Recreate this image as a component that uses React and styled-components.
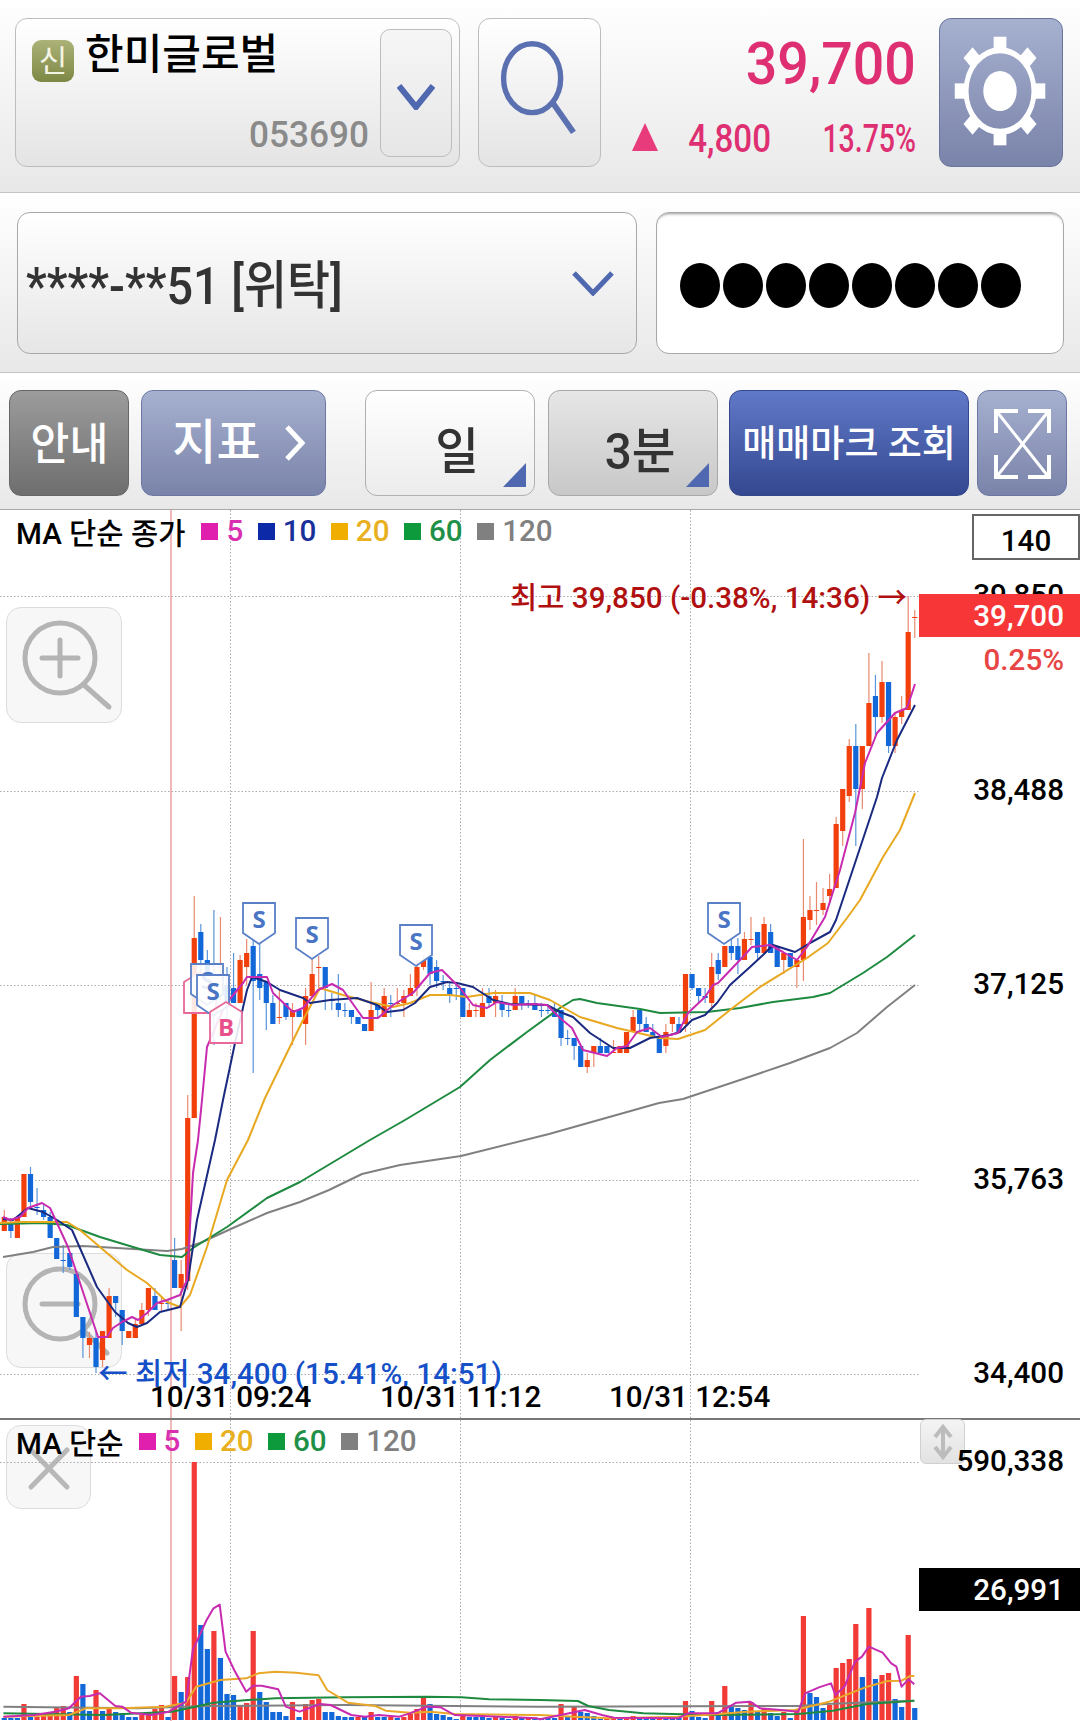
import styled, { createGlobalStyle, css } from "styled-components";

const GlobalStyle = createGlobalStyle`
	html, body {
		margin: 0;
		padding: 0;
		background: #fff;
	}
	* {
		box-sizing: border-box;
	}
	body {
		font-family: Roboto, "Noto Sans CJK KR", sans-serif;
		color: #000;
	}
`;

const R = "r";
const B = "b";

// type, body top, body bottom, wick top, wick bottom (page pixels)
const CANDLES = [
	[R, 1217, 1231, 1210, 1231], [B, 1224, 1231, 1218, 1238], [R, 1217, 1238, 1217, 1238], [R, 1174, 1217, 1174, 1217],
	[B, 1174, 1202, 1167, 1208], [B, 1207, 1208, 1188, 1215], [B, 1210, 1217, 1203, 1220], [B, 1217, 1238, 1212, 1238],
	[B, 1238, 1259, 1238, 1259], [B, 1260, 1261, 1245, 1273], [B, 1253, 1267, 1252, 1270], [B, 1274, 1317, 1274, 1317],
	[B, 1317, 1338, 1317, 1358], [R, 1338, 1345, 1332, 1358], [B, 1338, 1367, 1332, 1373], [R, 1331, 1360, 1331, 1367],
	[R, 1296, 1338, 1288, 1338], [B, 1296, 1303, 1296, 1317], [B, 1310, 1331, 1310, 1345], [R, 1331, 1338, 1331, 1338],
	[R, 1324, 1338, 1320, 1338], [R, 1310, 1324, 1303, 1324], [R, 1288, 1310, 1288, 1316], [B, 1296, 1310, 1288, 1310],
	[R, 1303, 1304, 1296, 1312], [B, 1303, 1304, 1300, 1310], [B, 1260, 1288, 1238, 1288], [R, 1274, 1288, 1260, 1331],
	[R, 1118, 1281, 1095, 1290], [R, 938, 1118, 896, 1118], [B, 932, 960, 924, 975], [B, 960, 985, 950, 1000],
	[B, 990, 1000, 910, 1045], [R, 975, 990, 917, 1000], [B, 985, 1003, 967, 1020], [B, 988, 1003, 953, 1003],
	[R, 960, 1003, 955, 1003], [R, 953, 967, 939, 985], [B, 946, 981, 940, 1073], [B, 974, 988, 943, 1000],
	[B, 982, 1003, 982, 1030], [B, 1003, 1024, 995, 1024], [R, 1017, 1018, 990, 1024], [B, 1003, 1017, 1003, 1020],
	[R, 1010, 1017, 1003, 1045], [B, 1010, 1017, 1010, 1017], [R, 996, 1024, 988, 1045], [R, 974, 996, 953, 996],
	[R, 967, 968, 956, 988], [B, 967, 988, 967, 1010], [B, 1000, 1001, 993, 1010], [B, 1003, 1010, 974, 1017],
	[B, 1010, 1011, 1003, 1017], [B, 1010, 1017, 1010, 1024], [B, 1017, 1024, 1017, 1024], [B, 1024, 1031, 1024, 1031],
	[R, 1010, 1031, 982, 1031], [B, 1003, 1010, 1003, 1017], [R, 996, 1017, 988, 1017], [B, 1003, 1004, 995, 1017],
	[R, 1003, 1004, 988, 1005], [R, 996, 1003, 990, 1017], [R, 988, 996, 974, 996], [R, 967, 988, 960, 996],
	[R, 960, 967, 955, 970], [B, 957, 974, 957, 985], [B, 967, 981, 960, 988], [B, 981, 982, 975, 990],
	[B, 988, 996, 982, 1003], [B, 988, 989, 982, 1000], [B, 988, 1017, 988, 1017], [R, 1010, 1017, 1003, 1017],
	[R, 1010, 1011, 1003, 1017], [R, 1003, 1017, 988, 1017], [B, 996, 1003, 988, 1008], [R, 996, 1003, 990, 1017],
	[B, 1003, 1010, 995, 1017], [B, 1010, 1011, 1003, 1017], [R, 996, 1010, 988, 1010], [B, 996, 1003, 996, 1010],
	[B, 1003, 1004, 1000, 1008], [B, 1003, 1010, 995, 1010], [B, 1010, 1011, 1003, 1017], [B, 1010, 1011, 1005, 1014],
	[B, 1010, 1017, 1003, 1017], [B, 1010, 1038, 1010, 1046], [B, 1038, 1039, 1030, 1045], [B, 1038, 1046, 1038, 1060],
	[B, 1046, 1067, 1046, 1067], [R, 1060, 1067, 1053, 1073], [R, 1046, 1053, 1046, 1067], [B, 1046, 1053, 1038, 1053],
	[B, 1046, 1053, 1046, 1053], [R, 1052, 1053, 1040, 1053], [R, 1046, 1053, 1046, 1053], [R, 1032, 1053, 1032, 1053],
	[R, 1017, 1032, 1010, 1032], [B, 1010, 1024, 1010, 1032], [B, 1024, 1032, 1017, 1032], [B, 1032, 1038, 1024, 1038],
	[B, 1038, 1053, 1038, 1053], [R, 1032, 1046, 1024, 1053], [R, 1017, 1024, 1017, 1032], [B, 1024, 1032, 1017, 1032],
	[R, 974, 1024, 974, 1032], [B, 974, 988, 974, 990], [B, 988, 996, 988, 1003], [B, 996, 998, 988, 1003],
	[R, 967, 1003, 953, 1010], [B, 960, 974, 953, 980], [R, 946, 967, 946, 967], [B, 946, 953, 938, 960],
	[B, 946, 960, 938, 974], [R, 939, 960, 932, 960], [R, 939, 940, 917, 945], [B, 932, 953, 932, 960],
	[R, 924, 953, 917, 953], [B, 932, 953, 924, 953], [B, 946, 967, 946, 967], [R, 953, 960, 953, 974],
	[B, 953, 967, 953, 967], [R, 960, 967, 960, 988], [R, 917, 960, 839, 981], [R, 910, 920, 896, 930],
	[R, 910, 911, 882, 925], [R, 903, 910, 888, 915], [R, 889, 896, 874, 905], [R, 824, 888, 817, 888],
	[R, 789, 831, 789, 846], [R, 746, 796, 739, 802], [B, 746, 789, 724, 846], [R, 746, 789, 746, 809],
	[R, 703, 746, 653, 746], [B, 696, 717, 675, 738], [R, 682, 717, 661, 723], [B, 682, 746, 682, 753],
	[R, 717, 746, 712, 753], [R, 710, 717, 696, 724], [R, 632, 710, 596, 710], [R, 617, 618, 610, 638],
];

const MA5 = [[3,1217],[10,1220],[20,1217],[28,1208],[42,1203],[50,1208],[57,1223],[68,1247],[80,1283],[90,1313],[98,1337],[107,1337],[113,1328],[122,1322],[132,1317],[138,1320],[147,1313],[157,1303],[167,1300],[180,1295],[187,1280],[193,1173],[198,1140],[202,1100],[207,1047],[225,1005],[243,983],[247,977],[267,977],[273,993],[293,1012],[303,1008],[318,990],[332,984],[343,990],[363,1018],[378,1018],[393,1005],[413,993],[430,973],[442,970],[460,988],[473,1005],[487,1008],[497,1002],[513,1005],[533,1004],[547,1005],[560,1018],[572,1028],[583,1050],[607,1056],[617,1048],[627,1046],[637,1032],[650,1028],[662,1037],[678,1033],[688,1013],[705,997],[713,985],[718,983],[740,960],[752,947],[770,945],[783,952],[797,960],[807,947],[825,917],[840,870],[855,813],[865,763],[877,733],[895,713],[907,708],[915,684]];
const MA10 = [[3,1219],[13,1220],[28,1208],[43,1212],[57,1220],[72,1230],[83,1255],[97,1287],[115,1312],[128,1323],[137,1327],[147,1323],[160,1312],[180,1307],[188,1280],[197,1220],[215,1140],[223,1100],[235,1043],[247,990],[252,977],[267,982],[280,990],[303,998],[310,1003],[330,1000],[357,998],[377,1005],[387,1012],[403,1010],[415,1003],[430,987],[447,982],[457,983],[473,987],[493,1000],[510,1004],[547,1005],[560,1012],[573,1017],[590,1033],[613,1048],[630,1048],[650,1038],[670,1035],[680,1032],[692,1020],[705,1015],[717,1003],[730,985],[750,967],[763,955],[773,945],[795,952],[810,943],[830,932],[836,920],[855,863],[877,797],[882,778],[897,740],[915,705]];
const MA20 = [[0,1223],[20,1222],[43,1222],[67,1222],[80,1230],[107,1253],[127,1270],[147,1283],[167,1302],[180,1307],[190,1295],[207,1247],[227,1180],[248,1140],[265,1098],[303,1020],[320,988],[343,995],[370,1002],[393,1007],[410,1003],[430,995],[450,995],[467,997],[493,993],[530,993],[550,1000],[580,1017],[617,1028],[660,1038],[678,1039],[705,1030],[730,1010],[760,987],[807,958],[828,943],[847,918],[860,900],[883,857],[900,830],[915,793]];
const MA60 = [[0,1224],[43,1223],[67,1225],[100,1237],[133,1247],[160,1255],[182,1257],[193,1248],[227,1227],[267,1198],[300,1182],[335,1161],[370,1140],[405,1120],[440,1099],[460,1087],[490,1060],[527,1032],[560,1008],[573,1000],[580,999],[597,1003],[640,1009],[660,1013],[707,1012],[740,1008],[773,1002],[813,997],[830,993],[863,973],[887,957],[915,935]];
const MA120 = [[3,1257],[33,1252],[53,1247],[83,1246],[117,1248],[167,1251],[182,1249],[200,1243],[233,1228],[267,1213],[300,1202],[329,1190],[362,1174],[400,1165],[461,1156],[549,1134],[659,1103],[683,1099],[740,1080],[790,1063],[830,1048],[857,1033],[887,1007],[915,985]];

// volume bar tops, one per candle, in page pixels
const VOLUMES = [1718,1718,1718,1704,1717,1717,1716,1715,1708,1706,1712,1676,1684,1711,1690,1711,1708,1712,1713,1717,1717,1715,1713,1709,1705,1717,1676,1692,1677,1462,1625,1649,1631,1658,1694,1695,1706,1703,1631,1692,1702,1712,1712,1716,1702,1717,1704,1700,1699,1712,1712,1716,1717,1717,1717,1717,1712,1717,1717,1717,1718,1717,1714,1709,1698,1704,1714,1715,1717,1719,1715,1717,1717,1717,1718,1717,1718,1719,1716,1718,1718,1718,1718,1718,1718,1704,1717,1707,1712,1713,1716,1719,1718,1717,1718,1717,1716,1717,1717,1718,1717,1718,1718,1718,1701,1711,1717,1718,1701,1712,1686,1706,1708,1710,1702,1712,1708,1713,1716,1712,1718,1710,1616,1693,1697,1708,1705,1668,1663,1659,1624,1677,1608,1679,1675,1673,1699,1707,1635,1708];
const VOLUME_UP = new Set([3,5,6,7,8,9,11,14,16,21,22,23,24,26,28,29,32,36,37,38,44,46,47,48,54,56,59,61,62,63,64,70,75,78,80,85,87,92,93,95,96,100,104,108,110,114,116,119,121,122,126,127,128,129,130,132,134,135,138]);

const toLeft = (pts) => pts.map(([x, y]) => [x / 2.904, 1400 + y / 3]);
const toRight = (pts) => pts.map(([x, y]) => [540 + x / 2.904, 1400 + y / 3]);

const VOL_MA5 = [...toLeft([[10,950],[100,945],[160,935],[200,925],[235,890],[260,888],[290,880],[335,918],[355,920],[380,938],[440,945],[490,935],[540,905],[560,750],[600,660],[620,625],[638,614],[655,755],[680,810],[715,875],[735,857],[760,857],[808,868],[830,920],[870,935],[930,912],[960,915],[1020,945],[1060,950],[1100,945],[1160,950],[1190,940],[1240,920],[1280,922],[1320,945],[1400,948],[1560,955]]), ...toRight([[0,958],[60,945],[130,930],[180,945],[215,953],[400,955],[430,940],[480,940],[515,940],[570,908],[610,905],[640,925],[700,930],[750,935],[770,880],[810,862],[845,850],[858,885],[885,858],[915,785],[935,770],[955,740],[995,758],[1020,790],[1035,800],[1050,860],[1070,838],[1087,853]])];
const VOL_MA20 = [...toLeft([[10,950],[200,945],[250,925],[350,925],[480,920],[540,908],[570,860],[640,840],[715,835],[750,820],[800,815],[860,818],[925,826],[950,870],[1010,908],[1090,918],[1120,932],[1190,938],[1250,935],[1320,942],[1560,945]]), ...toRight([[0,945],[100,950],[200,955],[400,950],[520,942],[600,935],[740,930],[840,905],[950,860],[1010,843],[1050,842],[1075,828],[1087,828]])];
const VOL_MA60 = [...toLeft([[10,940],[300,945],[500,935],[620,908],[720,900],[800,895],[1000,892],[1240,890],[1340,892],[1420,898],[1568,900]]), ...toRight([[0,900],[110,903],[140,918],[200,930],[300,940],[500,945],[750,942],[850,932],[950,912],[1087,902]])];
const VOL_MA120 = [...toLeft([[10,920],[400,925],[600,918],[1000,915],[1568,920]]), ...toRight([[0,920],[750,918],[830,912],[1087,902]])];

const candleX = (i) => 4.3 + 6.55 * i;
const toPoints = (pts) => pts.map((p) => p.join(",")).join(" ");

const BODY = { r: "#f2400d", b: "#1268d8" };
const WICK = { r: "#e98a70", b: "#5a94da" };

const squeeze = (sx, origin = "left") => css`
	transform: scaleX(${sx});
	transform-origin: ${origin} center;
`;

const Page = styled.div`
	width: 1080px;
	height: 1721px;
	overflow: hidden;
	display: flex;
	flex-direction: column;
`;

const Bar = styled.div`
	display: flex;
	height: ${(p) => p.$h}px;
	background: linear-gradient(#fff, #e8e8e8);
	border-bottom: 1px solid #c4c4c4;
`;

const TopBar = styled(Bar)`
	padding: 18px 17px 0 15px;
	align-items: flex-start;
`;

const StockBox = styled.div`
	width: 445px;
	height: 149px;
	padding: 10px 7px 9px 16px;
	display: flex;
	border: 1px solid #bdbdbd;
	border-radius: 12px;
	background: linear-gradient(#fff, #e4e4e4);
`;

const StockInfo = styled.div`
	flex: 1;
	padding: 1px 11px 0 0;
	display: flex;
	flex-direction: column;
	justify-content: space-between;
`;

const StockTitle = styled.div`
	display: flex;
	align-items: flex-start;
	gap: 11px;
`;

const Badge = styled.span`
	width: 42px;
	height: 42px;
	margin-top: 10px;
	display: flex;
	align-items: center;
	justify-content: center;
	border-radius: 9px;
	background: linear-gradient(#acb278, #7d8844);
	color: #f4f4e4;
	font-size: 31px;
	line-height: 1;
`;

const StockName = styled.span`
	margin-top: 2px;
	font-size: 42px;
	font-weight: 500;
	line-height: 46px;
	white-space: nowrap;
`;

const StockCode = styled.div`
	display: flex;
	justify-content: flex-end;
	font-size: 37px;
	font-weight: 500;
	line-height: 44px;
	color: #8a8a8a;
	${squeeze(0.95, "right")}
`;

const DropButton = styled.div`
	width: 72px;
	padding-top: 8px;
	display: flex;
	align-items: center;
	justify-content: center;
	border: 1px solid #bdbdbd;
	border-radius: 10px;
	background: linear-gradient(#f6f6f6, #e6e6e6);
`;

const SearchButton = styled.div`
	width: 123px;
	height: 149px;
	margin-left: 18px;
	border: 1px solid #bdbdbd;
	border-radius: 12px;
	background: linear-gradient(#fff, #e4e4e4);
`;

const PriceBlock = styled.div`
	flex: 1;
	height: 149px;
	padding: 19px 23px 0 0;
	display: flex;
	flex-direction: column;
	align-items: flex-end;
	color: #de2f72;
`;

const PriceNow = styled.div`
	font-size: 59px;
	font-weight: 500;
	line-height: 54px;
	${squeeze(0.94, "right")}
`;

const PriceChange = styled.div`
	margin-top: 22px;
	display: flex;
	align-items: center;
`;

const UpMark = styled.span`
	width: 26px;
	height: 28px;
	margin-right: 32px;
	background: #e83b7c;
	clip-path: polygon(50% 0, 100% 100%, 0 100%);
`;

const ChangeText = styled.span`
	display: flex;
	justify-content: flex-end;
	width: ${(p) => p.$w}px;
	margin: 4px 0 0 ${(p) => p.$gap || 0}px;
	font-size: 39px;
	font-weight: 500;
	line-height: 44px;
	white-space: nowrap;
	${(p) => squeeze(p.$sx, "right")}
`;

const SettingsButton = styled.div`
	width: 124px;
	height: 149px;
	border: 1px solid #68749c;
	border-radius: 12px;
	background: linear-gradient(#a6b0cf, #7a83a9);
`;

const AccountBar = styled(Bar)`
	padding: 19px 16px 0 17px;
	gap: 19px;
`;

const AccountBox = styled.div`
	width: 620px;
	height: 142px;
	padding: 0 22px 0 8px;
	display: flex;
	align-items: center;
	justify-content: space-between;
	border: 1px solid #a8a8a8;
	border-radius: 13px;
	background: linear-gradient(#fff, #e6e6e6);
`;

const AccountText = styled.span`
	margin-top: 8px;
	font-size: 52px;
	font-weight: 500;
	line-height: 60px;
	color: #333;
	white-space: nowrap;
	${squeeze(0.9)}
`;

const PasswordBox = styled.div`
	flex: 1;
	height: 142px;
	padding: 5px 0 0 23px;
	display: flex;
	align-items: center;
	gap: 3px;
	border: 1px solid #a8a8a8;
	border-radius: 13px;
	background: #fff;
	box-shadow: inset 0 3px 3px -2px #999;
`;

const PasswordDot = styled.span`
	width: 40px;
	height: 45px;
	border-radius: 50%;
	background: #000;
`;

const ToolBar = styled(Bar)`
	padding: 17px 0 0 9px;
	border-bottom-color: #a8a8a8;
`;

const ToolButton = styled.div`
	position: relative;
	width: ${(p) => p.$w}px;
	height: 106px;
	margin-left: ${(p) => p.$gap || 0}px;
	padding-left: ${(p) => p.$pad || 0}px;
	display: flex;
	align-items: center;
	justify-content: center;
	gap: ${(p) => p.$inner || 0}px;
	border: 1px solid ${(p) => p.$line || "#666"};
	border-radius: 12px;
	background: linear-gradient(${(p) => p.$from}, ${(p) => p.$to});
	color: #fff;
	font-weight: 500;
	white-space: nowrap;
`;

const ToolLabel = styled.span`
	margin-top: ${(p) => p.$dy || 0}px;
	font-size: ${(p) => p.$size}px;
	line-height: 50px;
	${(p) => squeeze(p.$sx || 1, "center")}
`;

const PickLabel = styled.span`
	margin: 18px 0 0 14px;
	font-size: 50px;
	line-height: 50px;
	color: #333;
	${squeeze(0.95, "center")}
`;

const CornerMark = styled.span`
	position: absolute;
	right: 8px;
	bottom: 8px;
	width: 23px;
	height: 24px;
	background: #5068b0;
	clip-path: polygon(100% 0, 100% 100%, 0 100%);
`;

const ChartPanel = styled.section`
	position: relative;
	height: 908px;
`;

const VolumePanel = styled.section`
	position: relative;
	flex: 1;
	border-top: 2px solid #777;
`;

const Canvas = styled.svg`
	position: absolute;
	left: 0;
	top: 0;
	width: 1080px;
	height: 100%;
`;

const Legend = styled.div`
	position: relative;
	height: 42px;
	padding-left: 16px;
	display: flex;
	align-items: center;
	font-size: 29.6px;
	font-weight: 500;
	white-space: nowrap;
`;

const LegendTitle = styled.span`
	margin-right: ${(p) => p.$gap}px;
	color: #000;
`;

const LegendItem = styled.span`
	display: flex;
	align-items: center;
	gap: 8px;
	margin-right: 14.5px;
	color: ${(p) => p.$text};

	&::before {
		content: "";
		width: 17px;
		height: 17px;
		background: ${(p) => p.$color};
	}
`;

const AxisLabel = styled.span`
	position: absolute;
	right: 16px;
	top: ${(p) => p.$y - 20}px;
	font-size: 29.6px;
	font-weight: 500;
	line-height: 40px;
	color: #000;
`;

const CountBox = styled.div`
	position: absolute;
	left: 972px;
	top: 4px;
	width: 108px;
	height: 46px;
	padding-top: 8px;
	display: flex;
	align-items: center;
	justify-content: center;
	border: 2px solid #666;
	font-size: 29.6px;
	font-weight: 500;
`;

const PriceTag = styled.div`
	position: absolute;
	left: 919px;
	top: ${(p) => p.$y}px;
	width: 161px;
	height: ${(p) => p.$h}px;
	padding-right: 16px;
	display: flex;
	align-items: center;
	justify-content: flex-end;
	background: ${(p) => p.$bg};
	color: #fff;
	font-size: 29.6px;
	font-weight: 500;
`;

const PercentLabel = styled(AxisLabel)`
	color: #e84545;
`;

const Note = styled.span`
	position: absolute;
	left: ${(p) => p.$x}px;
	top: ${(p) => p.$y - 20}px;
	font-size: 29.6px;
	font-weight: 500;
	line-height: 40px;
	color: ${(p) => p.$color};
	white-space: nowrap;
`;

const FloatButton = styled.div`
	position: absolute;
	left: 6px;
	top: ${(p) => p.$y}px;
	width: ${(p) => p.$w}px;
	height: ${(p) => p.$h}px;
	border: 1px solid #dcdcdc;
	border-radius: 15px;
	background: #f7f7f7;
`;

const ResizeButton = styled.div`
	position: absolute;
	left: 920px;
	top: -1px;
	width: 45px;
	height: 45px;
	border: 1px solid #d0d0d0;
	border-radius: 6px;
	background: linear-gradient(#f4f4f4, #e2e2e2);
`;

const IconBox = styled.svg`
	display: block;
	width: 100%;
	height: 100%;
`;

const Chevron = ({ w, h, color = "#5068b0", stroke = 6 }) => (
	<svg width={w} height={h} viewBox={`0 0 ${w} ${h}`}>
		<polyline
			points={`2,2 ${w / 2},${h - 3} ${w - 2},2`}
			fill="none"
			stroke={color}
			strokeWidth={stroke}
		/>
	</svg>
);

const SearchIcon = () => (
	<IconBox viewBox="0 0 123 149">
		<ellipse cx="54" cy="60" rx="29" ry="35" fill="none" stroke="#5a70b0" strokeWidth="5.5" />
		<line x1="75" y1="85" x2="96" y2="115" stroke="#5a70b0" strokeWidth="6" />
	</IconBox>
);

const GearIcon = () => (
	<IconBox viewBox="0 0 124 149">
		<g transform="translate(61 73) scale(1 1.2)" fill="#fff">
			{[0, 45, 90, 135, 180, 225, 270, 315].map((a) => (
				<rect key={a} x="-6.5" y="-46" width="13" height="12" transform={`rotate(${a})`} />
			))}
			<circle r="34.5" fill="none" stroke="#fff" strokeWidth="5" />
			<circle r="17" />
		</g>
	</IconBox>
);

const ExpandIcon = () => (
	<svg width="89" height="106" viewBox="0 0 89 106" style={{ position: "absolute", left: 0, top: 0 }}>
		<g fill="none" stroke="#fff" strokeWidth="4">
			<path d="M18 42 V20 H40 M50 20 H71 V42 M71 64 V86 H50 M40 86 H18 V64" />
			<path d="M20 22 L69 84 M69 22 L20 84" strokeWidth="3" />
		</g>
	</svg>
);

const ZoomIcon = ({ plus, cx, cy, hx, hy }) => (
	<IconBox>
		<g fill="none" stroke="#b4b4b4" strokeWidth="5" strokeLinecap="round">
			<circle cx={cx} cy={cy} r="35" />
			<line x1={cx + 24} y1={cy + 27} x2={hx} y2={hy} />
			<line x1={cx - 18} y1={cy} x2={cx + 18} y2={cy} />
			{plus && <line x1={cx} y1={cy - 18} x2={cx} y2={cy + 18} />}
		</g>
	</IconBox>
);

const CloseIcon = () => (
	<IconBox>
		<path d="M24 24 L60 61 M60 24 L24 61" stroke="#b8b8b8" strokeWidth="5" strokeLinecap="round" />
	</IconBox>
);

const ResizeIcon = () => (
	<IconBox>
		<path
			d="M14 17 L22 7 L30 17 M22 7 V37 M14 27 L22 37 L30 27"
			fill="none"
			stroke="#bcbcbc"
			strokeWidth="4"
		/>
	</IconBox>
);

const GridLines = ({ ys, bottom, top }) => (
	<g stroke="#aaa" strokeWidth="1" strokeDasharray="1.5 2">
		{ys.map((y) => (
			<line key={y} x1="0" y1={y + 0.5} x2="920" y2={y + 0.5} />
		))}
		{[230.5, 460.5, 690.5].map((x) => (
			<line key={x} x1={x} y1={top} x2={x} y2={bottom} />
		))}
	</g>
);

const Line = ({ pts, color, w = 2 }) => (
	<polyline points={toPoints(pts)} fill="none" stroke={color} strokeWidth={w} strokeLinejoin="round" />
);

const Candles = () =>
	CANDLES.map(([type, top, bottom, wickTop, wickBottom], i) => {
		const x = candleX(i);
		return (
			<g key={i}>
				<line x1={x} y1={wickTop} x2={x} y2={wickBottom} stroke={WICK[type]} strokeWidth="1.2" />
				<rect x={x - 2.6} y={top} width="5.2" height={bottom - top} fill={BODY[type]} />
			</g>
		);
	});

const VolumeBars = () =>
	VOLUMES.map((top, i) => (
		<rect
			key={i}
			x={candleX(i) - 2.6}
			y={top}
			width="5.2"
			height={1720 - top}
			fill={VOLUME_UP.has(i) ? "#f23a36" : "#1268d8"}
		/>
	));

// trade marks on the chart, S hangs from its top edge, B stands on its bottom edge
const SellMark = ({ x, y }) => (
	<g>
		<path
			d={`M${x} ${y} h32 v30 l-16 11 l-16 -11 z`}
			fill="#fff"
			fillOpacity="0.88"
			stroke="#5a80c8"
			strokeWidth="1.8"
		/>
		<text
			x={x + 16}
			y={y + 25}
			textAnchor="middle"
			fontFamily="'Open Sans', sans-serif"
			fontWeight="700"
			fontSize="24"
			fill="#4a74c4"
		>
			S
		</text>
	</g>
);

const BuyMark = ({ x, y, label = true }) => (
	<g>
		<path
			d={`M${x} ${y + 10} l16 -10 l16 10 v31 h-32 z`}
			fill="#fff"
			fillOpacity="0.88"
			stroke="#e8689a"
			strokeWidth="1.8"
		/>
		{label && (
			<text
				x={x + 16}
				y={y + 34}
				textAnchor="middle"
				fontFamily="'Open Sans', sans-serif"
				fontWeight="700"
				fontSize="24"
				fill="#e8508c"
			>
				B
			</text>
		)}
	</g>
);

const App = () => {
	return (
		<Page>
			<GlobalStyle />
			<TopBar $h={193}>
				<StockBox>
					<StockInfo>
						<StockTitle>
							<Badge>신</Badge>
							<StockName>한미글로벌</StockName>
						</StockTitle>
						<StockCode>053690</StockCode>
					</StockInfo>
					<DropButton>
						<Chevron w={38} h={26} />
					</DropButton>
				</StockBox>
				<SearchButton>
					<SearchIcon />
				</SearchButton>
				<PriceBlock>
					<PriceNow>39,700</PriceNow>
					<PriceChange>
						<UpMark />
						<ChangeText $w={81} $sx={0.85}>4,800</ChangeText>
						<ChangeText $w={91} $gap={54} $sx={0.73}>13.75%</ChangeText>
					</PriceChange>
				</PriceBlock>
				<SettingsButton>
					<GearIcon />
				</SettingsButton>
			</TopBar>

			<AccountBar $h={180}>
				<AccountBox>
					<AccountText>****-**51 [위탁]</AccountText>
					<Chevron w={42} h={25} stroke={5} />
				</AccountBox>
				<PasswordBox>
					{Array.from({ length: 8 }, (_, i) => (
						<PasswordDot key={i} />
					))}
				</PasswordBox>
			</AccountBar>

			<ToolBar $h={137}>
				<ToolButton $w={120} $from="#9c9c9c" $to="#6e6e6e">
					<ToolLabel $size={44} $sx={0.96} $dy={3}>안내</ToolLabel>
				</ToolButton>
				<ToolButton $w={185} $gap={12} $pad={10} $inner={24} $from="#a6b0cf" $to="#7a83a9" $line="#6c78a4">
					<ToolLabel $size={48}>지표</ToolLabel>
					<svg width="20" height="36" viewBox="0 0 20 36">
						<polyline points="2,2 17,18 2,34" fill="none" stroke="#fff" strokeWidth="5" />
					</svg>
				</ToolButton>
				<ToolButton $w={170} $gap={39} $from="#fff" $to="#ececec" $line="#b0b0b0">
					<PickLabel>일</PickLabel>
					<CornerMark />
				</ToolButton>
				<ToolButton $w={170} $gap={13} $from="#e6e6e6" $to="#c8c8c8" $line="#a8a8a8">
					<PickLabel>3분</PickLabel>
					<CornerMark />
				</ToolButton>
				<ToolButton $w={240} $gap={11} $from="#6079c8" $to="#344890" $line="#34468c">
					<ToolLabel $size={37} $dy={4}>매매마크 조회</ToolLabel>
				</ToolButton>
				<ToolButton $w={90} $gap={8} $from="#a6b0cf" $to="#7a83a9" $line="#6c78a4">
					<ExpandIcon />
				</ToolButton>
			</ToolBar>

			<ChartPanel>
				<FloatButton $y={97} $w={116} $h={116}>
					<ZoomIcon plus cx={53} cy={50} hx={102} hy={99} />
				</FloatButton>
				<FloatButton $y={743} $w={116} $h={115}>
					<ZoomIcon cx={53} cy={50} hx={100} hy={99} />
				</FloatButton>
				<Canvas viewBox="0 510 1080 908">
					<GridLines ys={[596, 791, 985, 1180, 1374]} top={510} bottom={1418} />
					<line x1="171" y1="510" x2="171" y2="1418" stroke="#e8a0a0" strokeWidth="1.5" />
					<Candles />
					<Line pts={MA120} color="#808080" />
					<Line pts={MA60} color="#1e8a40" />
					<Line pts={MA20} color="#e8a820" />
					<Line pts={MA10} color="#1a2a80" />
					<Line pts={MA5} color="#c82bb0" />
					<BuyMark x={184} y={972} label={false} />
					<SellMark x={191} y={964} />
					<SellMark x={197} y={975} />
					<BuyMark x={210} y={1002} />
					<SellMark x={243} y={903} />
					<SellMark x={296} y={918} />
					<SellMark x={400} y={925} />
					<SellMark x={708} y={903} />
				</Canvas>
				<Legend>
					<LegendTitle $gap={16}>MA 단순 종가</LegendTitle>
					<LegendItem $color="#e01fae" $text="#d92fb0">5</LegendItem>
					<LegendItem $color="#0c2aa8" $text="#19309a">10</LegendItem>
					<LegendItem $color="#f0af00" $text="#e8b020">20</LegendItem>
					<LegendItem $color="#0c9a3c" $text="#1f9048">60</LegendItem>
					<LegendItem $color="#808080" $text="#808080">120</LegendItem>
				</Legend>
				<CountBox>140</CountBox>
				<AxisLabel $y={85}>39,850</AxisLabel>
				<PriceTag $y={84} $h={43} $bg="#f73737">39,700</PriceTag>
				<PercentLabel $y={150}>0.25%</PercentLabel>
				<AxisLabel $y={280}>38,488</AxisLabel>
				<AxisLabel $y={474}>37,125</AxisLabel>
				<AxisLabel $y={669}>35,763</AxisLabel>
				<AxisLabel $y={863}>34,400</AxisLabel>
				<Note $x={510} $y={88} $color="#b01010">최고 39,850 (-0.38%, 14:36) →</Note>
				<Note $x={98} $y={864} $color="#1550c8">← 최저 34,400 (15.41%, 14:51)</Note>
				<Note $x={150} $y={887} $color="#000">10/31 09:24</Note>
				<Note $x={380} $y={887} $color="#000">10/31 11:12</Note>
				<Note $x={609} $y={887} $color="#000">10/31 12:54</Note>
			</ChartPanel>

			<VolumePanel>
				<FloatButton $y={5} $w={85} $h={84}>
					<CloseIcon />
				</FloatButton>
				<Canvas viewBox="0 1420 1080 301">
					<GridLines ys={[1462]} top={1420} bottom={1721} />
					<line x1="171" y1="1420" x2="171" y2="1721" stroke="#e8a0a0" strokeWidth="1.5" />
					<VolumeBars />
					<Line pts={VOL_MA120} color="#808080" />
					<Line pts={VOL_MA60} color="#1e8a40" />
					<Line pts={VOL_MA20} color="#eaa82a" />
					<Line pts={VOL_MA5} color="#c82bb0" />
				</Canvas>
				<Legend>
					<LegendTitle $gap={15}>MA 단순</LegendTitle>
					<LegendItem $color="#e01fae" $text="#d92fb0">5</LegendItem>
					<LegendItem $color="#f0af00" $text="#e8b020">20</LegendItem>
					<LegendItem $color="#0c9a3c" $text="#1f9048">60</LegendItem>
					<LegendItem $color="#808080" $text="#808080">120</LegendItem>
				</Legend>
				<ResizeButton>
					<ResizeIcon />
				</ResizeButton>
				<AxisLabel $y={41}>590,338</AxisLabel>
				<PriceTag $y={148} $h={43} $bg="#000">26,991</PriceTag>
			</VolumePanel>
		</Page>
	);
};

export default App;
